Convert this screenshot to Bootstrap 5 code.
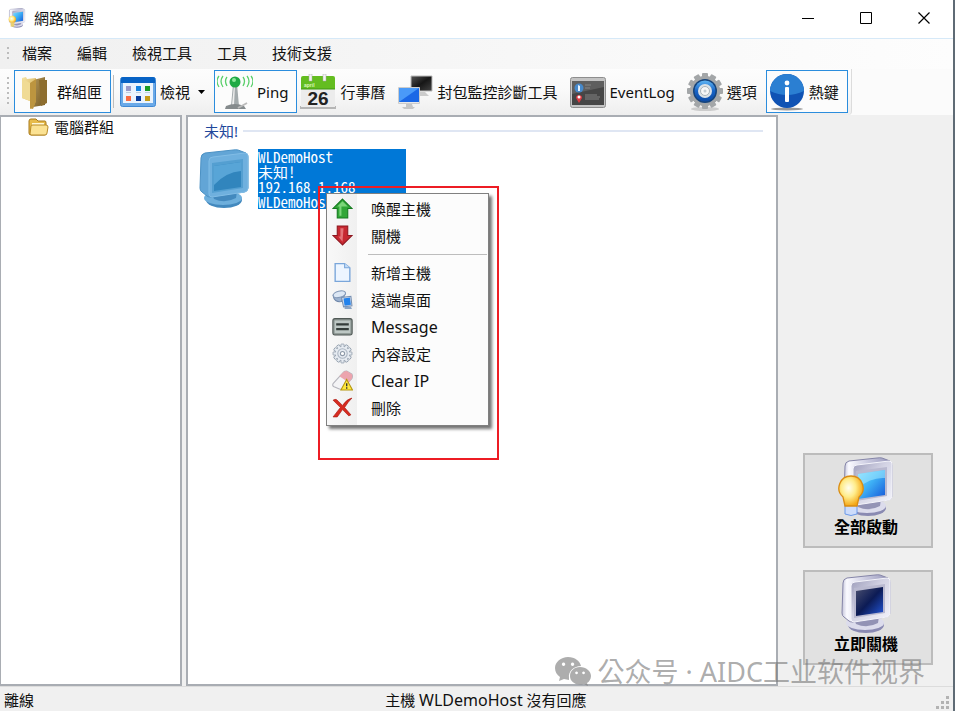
<!DOCTYPE html>
<html lang="zh-Hant">
<head>
<meta charset="utf-8">
<meta name="viewport" content="width=device-width, initial-scale=1">
<title>網路喚醒</title>
<link rel="stylesheet" href="https://cdn.jsdelivr.net/npm/bootstrap@5.3.0/dist/css/bootstrap.min.css">
<style>
  body { font-family: "Noto Sans", "Noto Sans CJK TC", sans-serif; font-size: 15px; line-height: 20px; color: #111; background: #f0f0f0; }
  svg { display: block; flex: none; }
  button { color: inherit; }
  .app-window { border-right: 2px solid #5f6b75; }
  .title-bar { height: 39px; padding-bottom: 2px; border-bottom: 1px solid #d6e9f8; }
  .win-btn { width: 58px; height: 36px; border: 0; background: none; }
  .menu-bar { height: 30px; padding-left: 10px; padding-bottom: 2px; background: linear-gradient(90deg, #f0f0f0, #fdfdfd); }
  .grip { position: absolute; left: 7px; top: 8px; bottom: 8px; width: 2px; background: repeating-linear-gradient(#bcbcbc 0 2px, transparent 2px 5px); }
  .menu-bar button { border: 0; background: none; padding: 0 12px; margin-right: 1px; }
  .tool-wrap { height: 46px; background: #fbfbfb; }
  .tool-strip { height: 46px; padding: 0 3px 1px 14px; background: linear-gradient(#fdfdfd, #f9f9f9 50%, #eeeeee); border-right: 1px solid #dcdcdc; border-radius: 0 0 4px 0; }
  .tool-btn { height: 43px; border: 1px solid transparent; background: none; padding: 0 8px 0 2px; gap: 4px; white-space: nowrap; }
  .tool-btn.is-on { border-color: #2b8ddd; background: #fcfcfc; }
  .tool-sep { width: 1px; height: 33px; margin: 0 3px 0 2px; background: #bdbdbd; }
  .pane { background: #fff; border: 2px solid #a9adb3; min-height: 0; }
  .tree-pane { width: 182px; border-left-width: 1px; }
  .host-pane { margin-left: 4px; padding: 4px 13px 4px 11px; }
  .group-title { color: #1f489c; height: 20px; padding-left: 5px; gap: 5px; }
  .group-title hr { flex: 1; margin: 0; border-top: 2px solid #dfe6f3; opacity: 1; }
  .host-item { margin-top: 8px; gap: 9px; }
  .host-label { width: 148px; height: 60px; background: #0078d7; color: #fff; line-height: 15px; white-space: nowrap; font-family: "Noto Sans CJK TC", sans-serif; font-feature-settings: "hwid" 1; }
  .ctx-menu { position: absolute; left: 127px; top: 44px; width: 163px; padding: 1px 1px 4px; border: 1px solid #808080; background: linear-gradient(90deg, #f8f8f8, #f0f0f0 30px, #fcfcfc 30px); box-shadow: 3px 3px 3px rgba(0,0,0,.55); z-index: 2; }
  .ctx-menu button { display: flex; align-items: center; width: 100%; height: 27px; border: 0; background: none; padding: 0 0 0 4px; gap: 18px; }
  .ctx-menu hr { margin: 5px 0 4px 40px; border-top: 1px solid #bdbdbd; opacity: 1; }
  .latin { font-size: 16px; }
  .mark-box { position: absolute; left: 318px; top: 186px; width: 181px; height: 274px; border: 2px solid #ed1c24; z-index: 3; pointer-events: none; }
  .side { width: 175px; padding: 0 20px 21px 25px; gap: 22px; }
  .side button { height: 95px; border: 2px solid #bcbcbc; background: #e1e1e1; color: #000; font-size: 16px; font-weight: 700; padding: 2px 4px 0 0; }
  .status-bar { height: 25px; padding-top: 3px; border-top: 1px solid #dcdcdc; }
  .status-bar .state { width: 40%; padding-left: 4px; }
  .status-bar .resize { position: absolute; right: 3px; bottom: 1px; }
  .watermark { position: absolute; right: 28px; bottom: 21px; gap: 7px; z-index: 4; font-family: "Noto Sans", "Noto Sans CJK SC", sans-serif; font-size: 27px; line-height: 36px; color: rgba(120,120,120,.62); white-space: nowrap; pointer-events: none; }
</style>
<script src="https://cdn.jsdelivr.net/npm/bootstrap@5.3.0/dist/js/bootstrap.bundle.min.js"></script>
</head>
<body>
<svg width="0" height="0" class="position-absolute" aria-hidden="true">
  <defs>
    <linearGradient id="sky" x1="0" y1="0" x2="1" y2="1"><stop offset="0" stop-color="#7fdcff"/><stop offset=".45" stop-color="#3fb2f6"/><stop offset="1" stop-color="#1556d8"/></linearGradient>
    <linearGradient id="night" x1="0" y1="0" x2="1" y2="1"><stop offset="0" stop-color="#4b5070"/><stop offset=".5" stop-color="#0c1b55"/><stop offset="1" stop-color="#2356d8"/></linearGradient>
    <linearGradient id="shell" x1="0" y1="0" x2="1" y2="0"><stop offset="0" stop-color="#c4c4da"/><stop offset=".1" stop-color="#fafaff"/><stop offset=".5" stop-color="#c9c9df"/><stop offset="1" stop-color="#9494b8"/></linearGradient>
    <linearGradient id="bezel" x1="0" y1="0" x2="1" y2="1"><stop offset="0" stop-color="#9c9cba"/><stop offset=".45" stop-color="#d3d3e4"/><stop offset="1" stop-color="#f4f4fb"/></linearGradient>
    <radialGradient id="glow" cx=".4" cy=".4" r=".6"><stop offset="0" stop-color="#fffef0"/><stop offset=".5" stop-color="#ffec8a"/><stop offset="1" stop-color="#f5a816"/></radialGradient>
    <linearGradient id="gold" x1="0" y1="0" x2="1" y2="1"><stop offset="0" stop-color="#f7e7a8"/><stop offset="1" stop-color="#c99b3c"/></linearGradient>
    <linearGradient id="brown" x1="0" y1="0" x2="1" y2="1"><stop offset="0" stop-color="#b29558"/><stop offset="1" stop-color="#765a22"/></linearGradient>
    <linearGradient id="blue" x1="0" y1="0" x2="0" y2="1"><stop offset="0" stop-color="#5fb5f3"/><stop offset=".5" stop-color="#1763c6"/><stop offset="1" stop-color="#0b4aa5"/></linearGradient>
    <linearGradient id="metal" x1="0" y1="0" x2="0" y2="1"><stop offset="0" stop-color="#d7d7d7"/><stop offset="1" stop-color="#66696c"/></linearGradient>
    <linearGradient id="dark" x1="0" y1="0" x2="1" y2="1"><stop offset="0" stop-color="#555"/><stop offset=".5" stop-color="#161616"/><stop offset="1" stop-color="#444"/></linearGradient>
    <symbol id="crt" viewBox="0 0 50 60">
      <ellipse cx="25" cy="51" rx="18" ry="8" fill="#8a8ab2"/><ellipse cx="24" cy="49" rx="19" ry="7" fill="#dcdcec"/>
      <path d="M13 45l25-3-1 7q-11 6-22 1z" fill="#9393b5"/>
      <path d="M2 9q0-4 4-5L34 1q3-.5 5 0l8 3q2 1 2 4v31q0 3-4 4L12 48q-3 0-4-1l-5-4q-2-1-2-4z" fill="url(#shell)" stroke="#8585a8"/>
      <path d="M10 12q0-4 4-4l32-4q3 0 3 3v32q0 3-3 4l-33 5q-3 0-3-3z" fill="url(#bezel)" stroke="#f4f4fb"/>
      <path d="M13 14l31-4v29l-31 5z" fill="#b9b9d0"/>
    </symbol>
    <g id="cog-teeth"><rect x="-3" y="-18" width="6" height="36" rx="1"/><rect x="-3" y="-18" width="6" height="36" rx="1" transform="rotate(30)"/><rect x="-3" y="-18" width="6" height="36" rx="1" transform="rotate(60)"/><rect x="-3" y="-18" width="6" height="36" rx="1" transform="rotate(90)"/><rect x="-3" y="-18" width="6" height="36" rx="1" transform="rotate(120)"/><rect x="-3" y="-18" width="6" height="36" rx="1" transform="rotate(150)"/></g>
    <path id="arrow" d="M10 1l9 9h-4v9H5v-9H1z"/>
  </defs>
</svg>

<div class="app-window d-flex flex-column vh-100 position-relative overflow-hidden">
  <header class="title-bar d-flex align-items-center bg-white">
    <svg class="ms-2 me-2" width="18" height="20" viewBox="0 0 50 60" aria-hidden="true"><use href="#crt" width="50" height="60"/><path d="M14 15l29-4v27l-29 5z" fill="url(#sky)"/><circle cx="11" cy="34" r="11" fill="url(#glow)"/><path d="M6 43h11v13H6z" fill="#e9cf73"/></svg>
    <span class="flex-grow-1">網路喚醒</span>
    <button class="win-btn d-flex align-items-center justify-content-center" aria-label="最小化"><svg width="13" height="13"><path d="M0 6.500h12" stroke="#000"/></svg></button>
    <button class="win-btn d-flex align-items-center justify-content-center" aria-label="最大化"><svg width="13" height="13"><path d="M.5.5h11v11H.5z" fill="none" stroke="#000"/></svg></button>
    <button class="win-btn d-flex align-items-center justify-content-center" aria-label="關閉"><svg width="13" height="13"><path d="M.5.5l11 11M11.500.5l-11 11" stroke="#000" stroke-width="1.200"/></svg></button>
  </header>

  <nav class="menu-bar d-flex align-items-stretch position-relative" aria-label="主選單">
    <span class="grip"></span>
    <button>檔案</button><button>編輯</button><button>檢視工具</button><button>工具</button><button>技術支援</button>
  </nav>

  <div class="tool-wrap d-flex">
    <div class="tool-strip d-flex align-items-center position-relative" role="toolbar">
      <span class="grip"></span>
      <button class="tool-btn is-on d-flex align-items-center">
        <svg width="36" height="36" viewBox="0 0 36 36"><path d="M16 6l12-3v28l-12 2z" fill="url(#brown)"/><path d="M22 6l8 0v23l-6 3z" fill="#8d6d2e"/><path d="M5 4l4-1 1 2 9-1v23l-3 7-3 1V27l-8-3z" fill="url(#gold)"/><path d="M5 5l8 4v18l-8-3z" fill="#f0db95"/><path d="M13 9l6-4v22l-3 8-3-1z" fill="#bd953f"/></svg>群組匣</button>
      <span class="tool-sep"></span>
      <button class="tool-btn d-flex align-items-center">
        <svg width="36" height="36" viewBox="0 0 36 36"><rect x=".5" y="3.500" width="35" height="29" rx="2" fill="#6aa9e8" stroke="#4189d4"/><path d="M1 5q0-2 2-2h30q2 0 2 2v4H1z" fill="#0863c5"/><path d="M3 9h30v20H3z" fill="#eaf3fd"/><path d="M6 12h5v5H6z" fill="#9999c9"/><path d="M16 12h5v5h-5z" fill="#1683df"/><path d="M25 12h5v5h-5z" fill="#189a25"/><path d="M6 22h5v5H6z" fill="#fa6b42"/><path d="M16 22h5v5h-5z" fill="#063b9c"/><path d="M25 22h5v5h-5z" fill="#c59b16"/><path d="M6 18.500h5m5 0h5m4 0h5" stroke="#bcd"/></svg>檢視
        <svg class="ms-1" width="7" height="4" viewBox="0 0 7 4"><path d="M0 0h7L3.500 4z"/></svg></button>
      <button class="tool-btn is-on d-flex align-items-center">
        <svg width="36" height="36" viewBox="0 0 36 36"><path d="M16 10h4l2 22h-8z" fill="#a4abad"/><path d="M17 11h1l-1 20h-2z" fill="#eee"/><path d="M9 32q9-4 18 0l2 3H8z" fill="#858b8d"/><path d="M21 34l9-5" stroke="#bbb" stroke-width="2"/><circle cx="18" cy="8" r="5.500" fill="#1fa944"/><circle cx="17" cy="6" r="2" fill="#8de89b"/><path d="M10 3q-3 4 0 9M6 2q-4 5 0 11M2 2q-4 5 0 11M26 3q3 4 0 9M30 2q4 5 0 11M34 2q4 5 0 11" fill="none" stroke="#5bd06c" stroke-width="1.300"/></svg>Ping</button>
      <button class="tool-btn d-flex align-items-center">
        <svg width="36" height="36" viewBox="0 0 36 36"><path d="M0 32h36v3H0z" fill="#b5b5b5"/><path d="M1 13h34v20H1z" fill="#ececec"/><path d="M1 4q0-2 2-2h30q2 0 2 2v11H1z" fill="#64bd20"/><path d="M1 15h34" stroke="#3e9712"/><path d="M9 0h3v7H9zM23 0h3v7h-3z" fill="#f3f3f3" stroke="#aaa" stroke-width=".5"/><text x="4" y="13" font-family="Liberation Sans" font-size="5" font-weight="700" fill="#dcf8bf">april</text><text x="18" y="31" font-family="Liberation Sans" font-size="19" font-weight="700" fill="#222" text-anchor="middle">26</text></svg>行事曆</button>
      <button class="tool-btn d-flex align-items-center">
        <svg width="36" height="36" viewBox="0 0 36 36"><path d="M13 2h21v15H13z" fill="url(#dark)" stroke="#bbb"/><path d="M22 18h5l4 4h-9z" fill="#ccc"/><path d="M.5 13.500h21v16H.5z" fill="#e8e8e8" stroke="#ccc"/><path d="M1 14h20v14H1z" fill="#1b68e6"/><path d="M1 28V14h20z" fill="#4a9af8"/><path d="M8 30h6l1 3h2l-2 2H6l-2-2h4z" fill="#c6c6c6"/></svg>封包監控診斷工具</button>
      <button class="tool-btn d-flex align-items-center">
        <svg width="36" height="36" viewBox="0 0 36 36"><rect x=".5" y="3.500" width="35" height="30" rx="2" fill="#c4c4c4" stroke="#8e8e8e"/><path d="M2 7h32v24H2z" fill="#464646"/><path d="M2 7h32v6L2 20z" fill="#5f5f5f"/><circle cx="9" cy="14" r="4.500" fill="#4789ca"/><path d="M8 11l2 1v5H8z" fill="#e6f2fd"/><path d="M9 29l-3-5a3 3 0 1 1 6 0z" fill="#dd3941"/><circle cx="9" cy="23" r="1.500" fill="#fff"/><path d="M15 11h6m-6 3h5m-5 7h12m-12 2h15m-15 2h14" stroke="#929292" stroke-width=".8"/></svg>EventLog</button>
      <button class="tool-btn d-flex align-items-center">
        <svg width="36" height="38" viewBox="0 0 36 38"><ellipse cx="18" cy="36" rx="14" ry="2" fill="#ccc"/><g transform="translate(18 18)" fill="url(#metal)"><circle r="15"/></g><g transform="translate(18 18)" fill="#a3a6a8"><use href="#cog-teeth"/><circle r="15"/></g><circle cx="18" cy="18" r="12" fill="#16447c"/><circle cx="18" cy="18" r="10.500" fill="url(#blue)"/><circle cx="18" cy="18" r="7" fill="#dbe2e7"/><circle cx="18" cy="18" r="4.500" fill="#f7f7f7" stroke="#aab3b9"/><circle cx="18" cy="18" r="1.500" fill="#c5cdd3"/></svg>選項</button>
      <button class="tool-btn is-on d-flex align-items-center ms-auto">
        <svg width="36" height="38" viewBox="0 0 36 38"><ellipse cx="18" cy="36" rx="16" ry="1.500" fill="#999"/><circle cx="18" cy="18" r="17" fill="#1053b4"/><path d="M1 18a17 17 0 0 1 34 0q-17 8-34 0z" fill="#2b7fd2"/><circle cx="18" cy="10" r="2.400" fill="#fff"/><rect x="16" y="14" width="4" height="15" rx="1" fill="#fff"/></svg>熱鍵</button>
    </div>
  </div>

  <main class="d-flex flex-grow-1">
    <section class="pane tree-pane flex-shrink-0" aria-label="群組">
      <div class="d-flex align-items-center gap-1">
        <svg class="ms-4" width="25" height="20" viewBox="0 0 25 20"><path d="M4 16V4q0-2 2-2h5l2 2h7q1 0 1 2v11q0 1-2 1H6q-2 0-2-2z" fill="#e7bb4b" stroke="#a87a1c"/><path d="M7 6h12v6H7z" fill="#fff8d8"/><path d="M5 17l1-8q0-1 2-1h13q2 0 2 2l-1 6q0 2-2 2H6z" fill="#fbe293" stroke="#b88b28"/></svg>電腦群組
      </div>
    </section>
    <section class="pane host-pane flex-grow-1" aria-label="主機">
      <div class="group-title d-flex align-items-center"><span>未知!</span><hr></div>
      <div class="host-item d-flex position-relative">
        <svg width="50" height="60" viewBox="0 0 50 60"><ellipse cx="25" cy="51" rx="18" ry="8" fill="#4389be"/><ellipse cx="24" cy="49" rx="19" ry="7" fill="#6eafdc"/><path d="M13 45l25-3-1 7q-11 6-22 1z" fill="#4389be"/><path d="M2 9q0-4 4-5L34 1q3-.5 5 0l8 3q2 1 2 4v31q0 3-4 4L12 48q-3 0-4-1l-5-4q-2-1-2-4z" fill="#62a5d6" stroke="#4b91c4"/><path d="M10 12q0-4 4-4l32-4q3 0 3 3v32q0 3-3 4l-33 5q-3 0-3-3z" fill="#6fb0de" stroke="#82bde6"/><path d="M13 14l31-4v29l-31 5z" fill="#549fd1"/><path d="M15 17l27-4v25l-27 4z" fill="#3185bd"/><path d="M15 17l27-4v9q-15 1-27 14z" fill="#58a5d7"/></svg>
        <div class="host-label">WLDemoHost<br>未知!<br>192.168.1.168<br>WLDemoHost</div>
        <div class="ctx-menu" role="menu">
          <button role="menuitem"><svg width="21" height="21" viewBox="0 0 20 20"><use href="#arrow" fill="#31a637" stroke="#147a1e"/><path d="M10 3l5 5H9v9H7V8H5z" fill="#7cd67a"/></svg>喚醒主機</button>
          <button role="menuitem"><svg width="21" height="21" viewBox="0 0 20 20"><g transform="rotate(180 10 10)"><use href="#arrow" fill="#c62831" stroke="#8d161f"/><path d="M10 4l4 5h-2v8H9z" fill="#e47378"/></g></svg>關機</button>
          <hr>
          <button role="menuitem"><svg width="21" height="21" viewBox="0 0 20 20"><path d="M3 1.500h9l5 4v13H3z" fill="#edf5ff" stroke="#7aa6da" stroke-width="1.300"/><path d="M12 1.500v4h5" fill="#c3dcf7" stroke="#7aa6da"/></svg>新增主機</button>
          <button role="menuitem"><svg width="21" height="21" viewBox="0 0 20 20"><path d="M1 6q1 7 8 6l4-8Q9 7 1 6z" fill="#9cb2cf" stroke="#6f87aa"/><ellipse cx="7" cy="5" rx="6" ry="3" fill="#dce7f4" stroke="#8298b7" transform="rotate(-14 7 5)"/><path d="M9 8l9-1 1 9-8 1z" fill="#d2dbea" stroke="#7790b2"/><path d="M11 9l6-1 1 7-6 1z" fill="#2282ec"/><path d="M12 17h6l1 2h-7z" fill="#8ca5c5"/></svg>遠端桌面</button>
          <button role="menuitem"><svg width="21" height="21" viewBox="0 0 20 20"><rect x=".8" y="2.500" width="18.400" height="15.500" rx="2" fill="#8c9693" stroke="#505956"/><rect x="2.500" y="4.300" width="15" height="12" fill="#bdc7c4"/><path d="M4 8h12M4 12.500h12" stroke="#343d3a" stroke-width="2.200"/></svg><span class="latin">Message</span></button>
          <button role="menuitem"><svg width="21" height="21" viewBox="-20 -20 40 40"><g fill="#e6ebf1" stroke="#8d99a8" stroke-width="1.500"><use href="#cog-teeth"/></g><circle r="13" fill="#e6ebf1"/><circle r="9" fill="none" stroke="#abb5c2" stroke-width="2"/><circle r="4" fill="#fff" stroke="#8d99a8" stroke-width="2"/></svg>內容設定</button>
          <button role="menuitem"><svg width="21" height="21" viewBox="0 0 20 20"><path d="M1 13L11 2q1-1 3-1l5 3q1 2 0 4l-9 10q-1 1-3 0l-5-2q-2-1-1-3z" fill="#f3f3f5" stroke="#b3b3bb"/><path d="M7 6l4-4q1-1 3-1l5 3q1 2 0 4l-3 4z" fill="#eca4ae"/><path d="M14 9l5.500 10h-11z" fill="#ffe83b" stroke="#b6970e"/><path d="M14 12.500v3m0 1v1.300" stroke="#333" stroke-width="1.300"/></svg><span class="latin">Clear IP</span></button>
          <button role="menuitem"><svg width="21" height="21" viewBox="0 0 20 20"><path d="M1 3q3-2 5 1l4 4q4-6 9-7-4 4-7 9l6 7-2 1-6-6-5 7-4 0 7-9z" fill="#d72b20" stroke="#a81912" stroke-width=".6"/></svg>刪除</button>
        </div>
      </div>
    </section>
    <aside class="side d-flex flex-column justify-content-end flex-shrink-0">
      <button class="d-flex flex-column align-items-center"><svg width="56" height="60" viewBox="0 0 56 60"><use href="#crt" x="5" width="50" height="60"/><path d="M20 17l27-4v25l-27 4z" fill="url(#sky)"/><path d="M20 17l27-4v8q-14-1-27 10z" fill="#b0efff" opacity=".5"/><path d="M7 48h12v9q-6 3-12 0z" fill="#cddcfb" stroke="#6d9ae8"/><path d="M13 19a12 12 0 0 1 8 21l-2 9H7l-2-9a12 12 0 0 1 8-21z" fill="url(#glow)" stroke="#d98c13" stroke-width="1.300"/></svg>全部啟動</button>
      <button class="d-flex flex-column align-items-center"><svg width="50" height="60" viewBox="0 0 50 60"><use href="#crt" width="50" height="60"/><path d="M15 17l27-4v25l-27 4z" fill="url(#night)"/></svg>立即關機</button>
    </aside>
  </main>

  <footer class="status-bar d-flex position-relative">
    <span class="state">離線</span><span class="ps-1">主機 <span class="latin">WLDemoHost</span> 沒有回應</span>
    <svg class="resize" width="14" height="14" fill="#b3b3b3"><path d="M10 0h3v3h-3zM5 5h3v3H5zM10 5h3v3h-3zM0 10h3v3H0zM5 10h3v3H5zM10 10h3v3h-3z"/></svg>
  </footer>

  <div class="mark-box"></div>
  <div class="watermark d-flex align-items-center">
    <svg width="36" height="30" viewBox="0 0 36 30" fill="#7b7b7b" fill-opacity=".62" aria-hidden="true"><path fill-rule="evenodd" d="M13 0c7 0 12 4 13 9-7 0-13 5-12 12l0 2-5-1-5 2 1-4C2 18 0 15 0 11 0 5 6 0 13 0zM8.500 5.500a1.700 1.700 0 1 0 .1 0zM17.500 5.500a1.700 1.700 0 1 0 .1 0z"/><path fill-rule="evenodd" d="M25 10c6 0 11 4 11 9 0 3-2 6-4 7l1 3-4-2c-8 2-14-2-14-8 0-5 4-9 10-9zM21.500 14.500a1.400 1.400 0 1 0 .1 0zM28.500 14.500a1.400 1.400 0 1 0 .1 0z"/></svg>
    <span>公众号 · AIDC工业软件视界</span>
  </div>
</div>
</body>
</html>
